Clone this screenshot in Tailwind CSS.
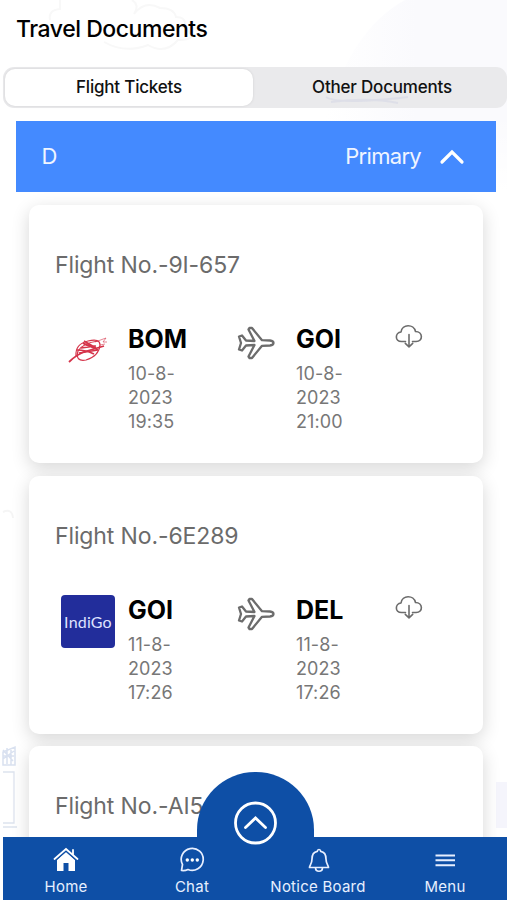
<!DOCTYPE html>
<html lang="en">
<head>
<meta charset="utf-8">
<title>Travel Documents</title>
<script src="https://cdn.jsdelivr.net/npm/@tailwindcss/browser@4"></script>
</head>
<body class="bg-white">
<svg class="hidden">
  <symbol id="plane" viewBox="0 0 38 34"><path d="M2 10.500L5 9.500L9 14.500L17.500 15L11.500 3.500L12.500 2H15L25 14.200L33 14.500Q36.500 15 36.500 17Q36.500 19 33 19.500L25 19.800L15 32H12.500L11.500 30.500L17.500 19L9 19.500L5 24.500L2 23.500L4 17Z" fill="none" stroke="#6c6c6c" stroke-width="2.300" stroke-linejoin="round"/></symbol>
  <symbol id="cloud" viewBox="0 0 28 25"><path d="M10.500 17.500H6.500C-.500 17.500 0 8.500 6 8C7 -.300 19 -.300 20.500 7.500C28 7.500 28.500 17.500 21 17.500H17.500M14 10.500V22.500M10.300 19.300L14 22.800L17.700 19.300" fill="none" stroke="#6c6c6c" stroke-width="1.600" stroke-linecap="round" stroke-linejoin="round"/></symbol>
</svg>
<div class="relative w-[507px] h-[900px] overflow-hidden font-['Inter',sans-serif] text-black flex flex-col">
  <svg class="absolute inset-0" width="507" height="900" fill="none">
    <defs><linearGradient id="g"><stop offset="0" stop-color="#fff"/><stop offset=".5" stop-color="#fafafd"/></linearGradient><linearGradient id="f" x2="0" y2="1"><stop offset=".6" stop-color="#fff" stop-opacity="0"/><stop offset="1" stop-color="#fff"/></linearGradient></defs>
    <path d="M325 120Q350 30 405 0H507V190H350Z" fill="url(#g)"/>
    <path d="M325 0H507V191H325Z" fill="url(#f)"/>
    <path d="M50 20Q48 10 60 9V0M132 0Q140 5 134 14Q145 0 160 8Q174 8 176 17Q187 17 185 28Q200 40 178 40Q165 55 148 45Q125 54 104 42" stroke="#f8f8f8" stroke-width="2"/>
    <path d="M3 512Q12 508 13 518" stroke="#f5f5f5" stroke-width="2"/>
    <path d="M496 782H507V828H496Z" fill="#f5f5fc"/>
    <path d="M3 752L15 747V765H3ZM3 750L13 761M3 759L14 751M7 748V764M3 756H14M11 750V765" stroke="#d9e1f0" stroke-width="1.500"/>
    <path d="M3 772H14V823H3M3 827H17" stroke="#dde3ee" stroke-width="1.300"/>
  </svg>
  <h1 class="relative h-[67px] shrink-0 pt-[14px] pl-4 text-[23px] leading-[30px] font-medium tracking-[-0.46px] whitespace-nowrap">Travel Documents</h1>
  <div class="relative ml-[3px] h-[41px] shrink-0 rounded-[11px] bg-[#eaeaec] flex p-[2px] text-[17px] font-medium tracking-[-0.2px] text-[#111]">
    <div class="w-[248px] rounded-[10px] bg-white shadow-[0_0_3px_rgba(0,0,0,0.1)] flex items-center justify-center pt-px">Flight Tickets</div>
    <div class="flex-1 flex items-center justify-center pl-[6px] pt-px">Other Documents</div>
    <svg class="absolute left-[320px] top-[27px]" width="100" height="12" fill="none"><path d="M3 3Q15 11 85 3M8 8Q45 3 75 9" stroke="#c8cce1" stroke-opacity=".35" stroke-width="2"/></svg>
  </div>
  <div class="relative mt-[13px] ml-[15.500px] mr-[11px] h-[71px] shrink-0 bg-[#448aff] text-[#f0f5ff] text-[22px] flex items-center pl-[26px] pr-[31px]">
    <span class="flex-1">D</span><span class="tracking-[-0.7px]">Primary</span>
    <svg class="ml-[18px]" width="26" height="18" fill="none"><path d="M3 14L13 4L23 14" stroke="#fff" stroke-width="3.200" stroke-linecap="round"/></svg>
  </div>
  <main class="relative shrink-0 pt-[13px] pl-[29px] pr-[24px] flex flex-col gap-[12.500px]">
    <section class="h-[258px] shrink-0 rounded-[10px] bg-white shadow-[0_5px_18px_rgba(0,0,0,0.16)] pl-[26px] pt-[45px]">
      <h2 class="text-[#6b6b6b] text-[23px] leading-[30px] tracking-[-0.12px] whitespace-nowrap">Flight No.-9I-657</h2>
      <div class="mt-[44px] flex items-start">
        <svg class="ml-[6px] w-[54px] h-[53px]" viewBox="0 0 54 53" fill="none" stroke="#d5344a"><path d="M8 38Q16 30 26 27L43 22" stroke-width="1.800"/><path d="M15 32Q14 20 27 17Q39 14 39 21Q38 32 25 36Q14 38 17 27Q22 19 37 17" stroke-width="1.200"/><path d="M16 26Q25 26 33 30M20 24L35 22Q27 23 22 19L37 26M23 17L35 24M18 29L37 26" stroke-width="1.700"/><path d="M34 18L45 14L42 18L46 18M39 21L44 20" stroke-width=".6"/></svg>
        <div class="ml-[13px] w-[109px]">
          <div class="text-[25px] leading-[30px] font-bold">BOM</div>
          <div class="mt-[8px] w-[58px] text-[18px] leading-[24px] tracking-[0.1px] text-[#777]">10-8-<br>2023<br>19:35</div>
        </div>
        <svg class="mt-[2px] w-[38px] h-[34px]"><use href="#plane"/></svg>
        <div class="ml-[21px] w-[99px]">
          <div class="text-[25px] leading-[30px] font-bold">GOI</div>
          <div class="mt-[8px] w-[58px] text-[18px] leading-[24px] tracking-[0.1px] text-[#777]">10-8-<br>2023<br>21:00</div>
        </div>
        <svg class="w-[28px] h-[25px]"><use href="#cloud"/></svg>
      </div>
    </section>
    <section class="h-[258px] shrink-0 rounded-[10px] bg-white shadow-[0_5px_18px_rgba(0,0,0,0.16)] pl-[26px] pt-[45px]">
      <h2 class="text-[#6b6b6b] text-[23px] leading-[30px] tracking-[-0.12px] whitespace-nowrap">Flight No.-6E289</h2>
      <div class="mt-[44px] flex items-start">
        <div class="ml-[6px] w-[54px] h-[53px] rounded-[4px] bg-[#222d9b] text-[#dfe2ff] font-['Lato',sans-serif] text-[16px] tracking-[0.2px] flex items-center justify-center pt-[2px]">IndiGo</div>
        <div class="ml-[13px] w-[109px]">
          <div class="text-[25px] leading-[30px] font-bold">GOI</div>
          <div class="mt-[8px] w-[58px] text-[18px] leading-[24px] tracking-[0.1px] text-[#777]">11-8-<br>2023<br>17:26</div>
        </div>
        <svg class="mt-[2px] w-[38px] h-[34px]"><use href="#plane"/></svg>
        <div class="ml-[21px] w-[99px]">
          <div class="text-[25px] leading-[30px] font-bold">DEL</div>
          <div class="mt-[8px] w-[58px] text-[18px] leading-[24px] tracking-[0.1px] text-[#777]">11-8-<br>2023<br>17:26</div>
        </div>
        <svg class="w-[28px] h-[25px]"><use href="#cloud"/></svg>
      </div>
    </section>
    <section class="h-[258px] shrink-0 rounded-[10px] bg-white shadow-[0_5px_18px_rgba(0,0,0,0.16)] pl-[26px] pt-[45px]">
      <h2 class="text-[#6b6b6b] text-[23px] leading-[30px] tracking-[-0.12px] whitespace-nowrap">Flight No.-AI5</h2>
    </section>
  </main>
  <div class="absolute left-[197px] top-[772px] w-[117px] h-[116px] rounded-t-[58px] bg-[#0e4fa6]"></div>
  <nav class="absolute left-[3px] right-0 bottom-0 h-[63px] bg-[#0e4fa6] text-[#e7efff] text-[15px] leading-[20px] tracking-[0.25px] grid grid-cols-4 pt-[10px]">
    <div class="flex flex-col items-center gap-[4px]">
      <svg width="26" height="26" fill="#fff"><path d="M4 13L13 5L22 13V24H15.500V16H10.500V24H4Z"/><path d="M1.500 12L13 2L24.500 12M20 8V3" fill="none" stroke="#fff" stroke-width="1.800" stroke-linecap="round"/><path d="M3.500 12.800L13 4.500L22.500 12.800" fill="none" stroke="#0e4fa6" stroke-width=".7"/></svg>
      <span>Home</span>
    </div>
    <div class="flex flex-col items-center gap-[4px]">
      <svg width="26" height="26" fill="none"><path d="M2.500 23.500L3.500 17.500A11 11 0 1 1 9 22.500Q6 24 2.500 23.500Z" stroke="#e7efff" stroke-width="1.700" stroke-linejoin="round"/><g fill="#fff"><circle cx="8.300" cy="13" r="1.700"/><circle cx="13.300" cy="13" r="1.700"/><circle cx="18.300" cy="13" r="1.700"/></g></svg>
      <span>Chat</span>
    </div>
    <div class="flex flex-col items-center gap-[4px]">
      <svg class="translate-x-[1px]" width="26" height="26" fill="none" stroke="#e7efff" stroke-width="1.700" stroke-linejoin="round"><path d="M13 2.500Q11.500 2.500 11.300 4.300C7 5 6 8.500 6 12C6 17 3.500 18.500 3.500 20.500H22.500C22.500 18.500 20 17 20 12C20 8.500 19 5 14.700 4.300Q14.500 2.500 13 2.500ZM9.500 20.500C9.500 25.500 16.500 25.500 16.500 20.500"/></svg>
      <span class="whitespace-nowrap">Notice Board</span>
    </div>
    <div class="flex flex-col items-center gap-[4px] translate-x-[1px]">
      <svg width="26" height="26" stroke="#e7efff" stroke-width="1.900"><path d="M3.500 8.500H23M3.500 13.300H23M3.500 18.200H23"/></svg>
      <span>Menu</span>
    </div>
  </nav>
  <svg class="absolute left-[232px] top-[800px]" width="46" height="46" fill="none" stroke="#fff" stroke-width="2.800"><circle cx="23.500" cy="23" r="20"/><path d="M13.500 27.500L23.500 18L33.500 27.500" stroke-linecap="round"/></svg>
</div>
</body>
</html>
